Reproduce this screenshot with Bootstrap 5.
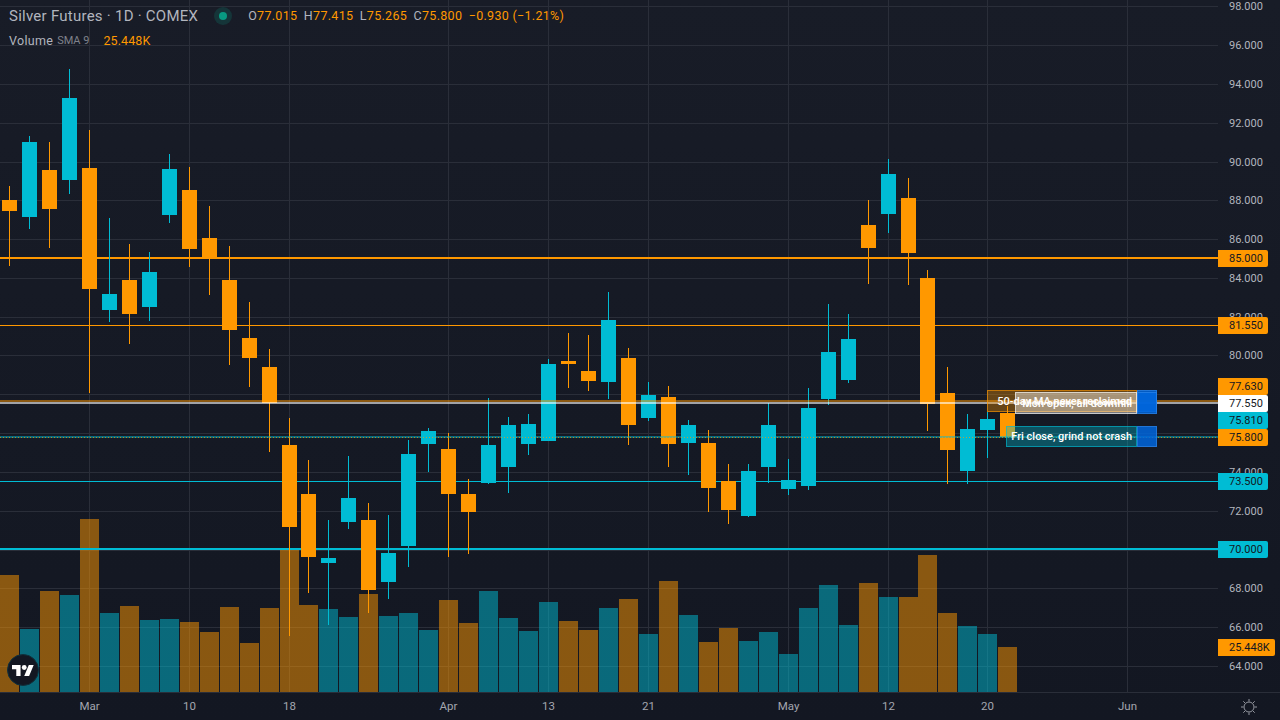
<!DOCTYPE html>
<html lang="en">
<head>
    <meta charset="UTF-8">
    <meta name="viewport" content="width=device-width, initial-scale=1.0">
    <title>Silver Futures - 1D - COMEX</title>
    <link href="https://cdn.jsdelivr.net/npm/bootstrap@5.3.0/dist/css/bootstrap.min.css" rel="stylesheet">
    <style>
        body {
            background: linear-gradient(#181c27, #131722);
            font-family: Roboto, "Liberation Sans", sans-serif;
            color: #b2b5be;
        }
        .chart-pane { width: 1218px; height: 692px; }
        .chart-pane svg { display: block; }
        .price-axis { width: 62px; height: 692px; font-size: 11px; }
        .time-row { height: 28px; border-top: 1px solid #2a2e39; }
        .time-axis { width: 1218px; font-size: 11.5px; color: #a3a6af; }
        .corner { width: 62px; }

        .legend { left: 9px; top: 7px; }
        .legend-title { font-size: 15px; line-height: 18px; letter-spacing: .25px; }
        .legend-row { font-size: 12.5px; line-height: 18px; letter-spacing: .3px; margin-top: 7px; }
        .legend-ohlc { font-size: 12.5px; letter-spacing: .3px; gap: 6.5px; }
        .legend-muted { color: #7f828b; font-size: 11px; letter-spacing: 0; }
        .legend-volume { margin-left: 14px; letter-spacing: .1px; }
        .val { color: #ff9800; }
        .status { width: 18px; height: 18px; border-radius: 50%; background: rgba(8, 153, 129, .2); margin-left: 16px; margin-right: 16px; }
        .status i { width: 8px; height: 8px; border-radius: 50%; background: #089981; }

        .tick { left: 0; padding-left: 11px; height: 17px; line-height: 17px; }
        .tag { width: 50px; color: #131722; border-radius: 0 2px 2px 0; }
        .tag-wide { width: 57px; }
        .tag-o { background: #ff9800; }
        .tag-t { background: #00bcd4; }
        .tag-w { background: #fff; }
        .time-label { top: 5px; transform: translateX(-50%); }

        .logo { left: 7px; top: 654px; width: 32px; height: 32px; background: #131722; border: 1px solid #10303c; }

        .note { font-size: 11px; font-weight: 500; color: #fff; line-height: 1; white-space: nowrap; }
        .note-text { border-width: 1px; border-style: solid; padding-right: 4px; }
        .note-end { width: 20px; background: rgba(0, 102, 221, .85); border: 1px solid rgba(70, 150, 240, .45); }
        .note-a { left: 987px; top: 390px; height: 22px; }
        .note-a .note-text { width: 150px; background: rgba(255, 152, 0, .35); border-color: rgba(255, 152, 0, .6); }
        .note-b { left: 1015px; top: 392px; height: 22px; }
        .note-b .note-text { width: 122px; background: rgba(255, 255, 255, .42); border-color: rgba(255, 255, 255, .6); }
        .note-c { left: 1006px; top: 426px; height: 21px; }
        .note-c .note-text { width: 131px; background: rgba(0, 188, 212, .35); border-color: rgba(0, 188, 212, .6); }
    </style>
</head>
<body class="overflow-hidden">
    <div class="d-flex flex-column vh-100">
        <div class="d-flex">
            <div class="chart-pane position-relative overflow-hidden">
                <svg id="chart" width="1218" height="692" xmlns="http://www.w3.org/2000/svg"></svg>

                <div class="legend position-absolute">
                    <div class="d-flex align-items-center legend-title">
                        <span>Silver Futures · 1D · COMEX</span>
                        <span class="status d-flex align-items-center justify-content-center"><i></i></span>
                        <span class="legend-ohlc d-flex">
                            <span>O<span class="val">77.015</span></span>
                            <span>H<span class="val">77.415</span></span>
                            <span>L<span class="val">75.265</span></span>
                            <span>C<span class="val">75.800</span></span>
                            <span class="val">−0.930 (−1.21%)</span>
                        </span>
                    </div>
                    <div class="legend-row d-flex align-items-center">
                        <span>Volume</span>
                        <span class="legend-muted ms-1">SMA 9</span>
                        <span class="val legend-volume">25.448K</span>
                    </div>
                </div>

                <div class="note note-a position-absolute d-flex">
                    <div class="note-text d-flex align-items-center justify-content-end">50-day MA never reclaimed</div>
                    <div class="note-end"></div>
                </div>
                <div class="note note-b position-absolute d-flex">
                    <div class="note-text d-flex align-items-center justify-content-end">Mon open, all downhill</div>
                    <div class="note-end"></div>
                </div>
                <div class="note note-c position-absolute d-flex">
                    <div class="note-text d-flex align-items-center justify-content-end">Fri close, grind not crash</div>
                    <div class="note-end"></div>
                </div>

                <div class="logo position-absolute rounded-circle d-flex align-items-center justify-content-center">
                    <svg width="22" height="11" viewBox="0 4 36 18" xmlns="http://www.w3.org/2000/svg">
                        <path fill="#fff" d="M14 22H7V11H0V4h14v18zM28 22h-8l7.5-18h8L28 22z"/>
                        <circle fill="#fff" cx="20" cy="8" r="4"/>
                    </svg>
                </div>
            </div>
            <div id="priceAxis" class="price-axis position-relative overflow-hidden"></div>
        </div>
        <div class="d-flex time-row flex-grow-1">
            <div id="timeAxis" class="time-axis position-relative"></div>
            <div class="corner d-flex align-items-center justify-content-center">
                <svg width="18" height="18" viewBox="0 0 18 18" fill="none" stroke="#9598a1" xmlns="http://www.w3.org/2000/svg">
                    <circle cx="9" cy="9" r="5"/>
                    <path d="M9 1v2.5M9 14.5V17M1 9h2.5M14.5 9H17M3.3 3.3l1.8 1.8M12.9 12.9l1.8 1.8M3.3 14.7l1.8-1.8M12.9 5.1l1.8-1.8"/>
                </svg>
            </div>
        </div>
    </div>

    <script src="https://cdn.jsdelivr.net/npm/bootstrap@5.3.0/dist/js/bootstrap.bundle.min.js"></script>
    <script>
        var ORANGE = '#ff9800', TEAL = '#00bcd4';

        // center x, wick top, wick bottom, body top, body bottom, colour
        var candles = [
            [9.5,186,266,200,211,'o'],[29.5,136,229,142,217,'t'],[49.5,142,248,170,209,'o'],[69.5,69,194,98,180,'t'],
            [89.5,130,393,168,289,'o'],[109.5,218,322,294,310,'t'],[129.5,244,344,280,314,'o'],[149.5,252,321,272,307,'t'],
            [169.5,154,223,169,215,'t'],[189.5,167,267,190,249,'o'],[209.5,206,295,238,259,'o'],[229.5,246,365,280,330,'o'],
            [249.5,302,387,338,358,'o'],[269.5,349,452,367,403,'o'],[289.5,418,636,445,527,'o'],[308.5,460,593,494,557,'o'],
            [328.5,520,625,558,563,'t'],[348.5,456,529,498,522,'t'],[368.5,503,613,520,590,'o'],[388.5,515,599,553,582,'t'],
            [408.5,440,567,454,546,'t'],[428.5,428,472,431,444,'t'],[448.5,433,557,449,494,'o'],[468.5,479,554,494,512,'o'],
            [488.5,398,484,445,483,'t'],[508.5,417,493,425,467,'t'],[528.5,414,455,424,444,'t'],[548.5,359,441,364,441,'t'],
            [568.5,333,388,361,364,'o'],[588.5,335,391,371,381,'o'],[608.5,292,399,320,382,'t'],[628.5,348,445,358,425,'o'],
            [648.5,382,421,395,418,'t'],[668.5,386,467,397,444,'o'],[688.5,420,475,425,443,'t'],[708.5,430,512,443,488,'o'],
            [728.5,464,524,481,510,'o'],[748.5,464,517,471,516,'t'],[768.5,403,483,425,467,'t'],[788.5,459,495,480,489,'t'],
            [808.5,388,490,408,486,'t'],[828.5,304,405,352,399,'t'],[848.5,314,383,339,380,'t'],[868.5,200,284,225,248,'o'],
            [888.5,159,233,174,214,'t'],[908.5,178,285,198,253,'o'],[927.5,270,431,278,404,'o'],[947.5,367,484,393,450,'o'],
            [967.5,414,484,429,471,'t'],[987.5,412,458,419,430,'t'],[1007.5,406,437,413,437,'o']
        ];

        // volume bar top for each candle, same order
        var volumes = [
            575,629,591,595,519,613,606,620,619,622,632,607,643,608,550,605,609,617,594,616,613,630,600,623,591,618,
            631,602,621,630,608,599,634,581,615,642,628,641,632,654,608,585,625,583,597,597,555,613,626,634,647
        ];
        var volColor = ['o','t','o','t','o','t','o','t','t','o','o','o','o','o','o','o','t','t','o','t','t','t','o','o','t','t',
            't','t','o','o','t','o','t','o','t','o','o','t','t','t','t','t','t','o','t','o','o','o','t','t','o'];

        // third value false: the label sits fully behind a price tag, so only the grid line is drawn
        var priceTicks = [[98,6],[96,45],[94,84],[92,123],[90,162],[88,200],[86,239],[84,278],[82,317],[80,355],
            [78,394,false],[76,433,false],[74,472],[72,511],[70,550,false],[68,588],[66,627],[64,666]];
        var timeTicks = [['Mar',89.5],['10',189.5],['18',289.5],['Apr',448.5],['13',548.5],['21',648.5],['May',788.5],
            ['12',888.5],['20',987.5],['Jun',1127.5]];
        var tags = [['85.000',258,'o'],['81.550',325.5,'o'],['77.630',386.5,'o'],['77.550',403.5,'w'],['75.810',420.5,'t'],
            ['75.800',437.5,'o'],['73.500',481.5,'t'],['70.000',549.5,'t'],['25.448K',647.5,'o']];

        var svg = '';
        function line(x1, y1, x2, y2, color, w, extra) {
            svg += '<line x1="' + x1 + '" y1="' + y1 + '" x2="' + x2 + '" y2="' + y2 + '" stroke="' + color + '" stroke-width="' + w + '" ' + (extra || '') + '/>';
        }
        function rect(x, y, w, h, color, extra) {
            svg += '<rect x="' + x + '" y="' + y + '" width="' + w + '" height="' + h + '" fill="' + color + '" ' + (extra || '') + '/>';
        }

        priceTicks.forEach(function (t) { line(0, t[1] + .5, 1218, t[1] + .5, '#2a2e39', 1); });
        timeTicks.forEach(function (t) { line(t[1], 0, t[1], 692, '#2a2e39', 1); });

        volumes.forEach(function (top, i) {
            var c = volColor[i] == 'o' ? ORANGE : TEAL;
            rect(candles[i][0] - 9.5, top, 19, 692 - top, c, 'fill-opacity=".5"');
        });

        // levels that sit behind the candles
        line(0, 258, 1218, 258, ORANGE, 2);
        line(0, 325.5, 1218, 325.5, ORANGE, 1);
        line(0, 481.5, 1218, 481.5, TEAL, 1);
        line(0, 549, 1218, 549, TEAL, 2);

        candles.forEach(function (c) {
            var col = c[5] == 'o' ? ORANGE : TEAL;
            line(c[0], c[1], c[0], c[2], col, 1);
            rect(c[0] - 7.5, c[3], 15, c[4] - c[3], col);
        });

        // moving average band and last price, drawn over the candles
        line(0, 401, 1218, 401, ORANGE, 2, 'stroke-opacity=".5"');
        line(0, 403, 1218, 403, '#fff', 2, 'stroke-opacity=".6"');
        line(0, 437, 1218, 437, TEAL, 2, 'stroke-opacity=".5"');
        line(0, 437.5, 1218, 437.5, ORANGE, 1, 'stroke-dasharray="1 2" stroke-opacity=".7"');

        document.getElementById('chart').innerHTML = svg;

        var html = '';
        priceTicks.forEach(function (t) {
            if (t[2] === false) return;
            html += '<div class="tick position-absolute" style="top:' + (t[1] - 8) + 'px">' + t[0] + '.000</div>';
        });
        tags.forEach(function (t) {
            var wide = t[0].length > 6 ? ' tag-wide' : '';
            html += '<div class="tick tag tag-' + t[2] + wide + ' position-absolute" style="top:' + (t[1] - 8.5) + 'px">' + t[0] + '</div>';
        });
        document.getElementById('priceAxis').innerHTML = html;

        html = '';
        timeTicks.forEach(function (t) {
            html += '<div class="time-label position-absolute" style="left:' + t[1] + 'px">' + t[0] + '</div>';
        });
        document.getElementById('timeAxis').innerHTML = html;
    </script>
</body>
</html>
